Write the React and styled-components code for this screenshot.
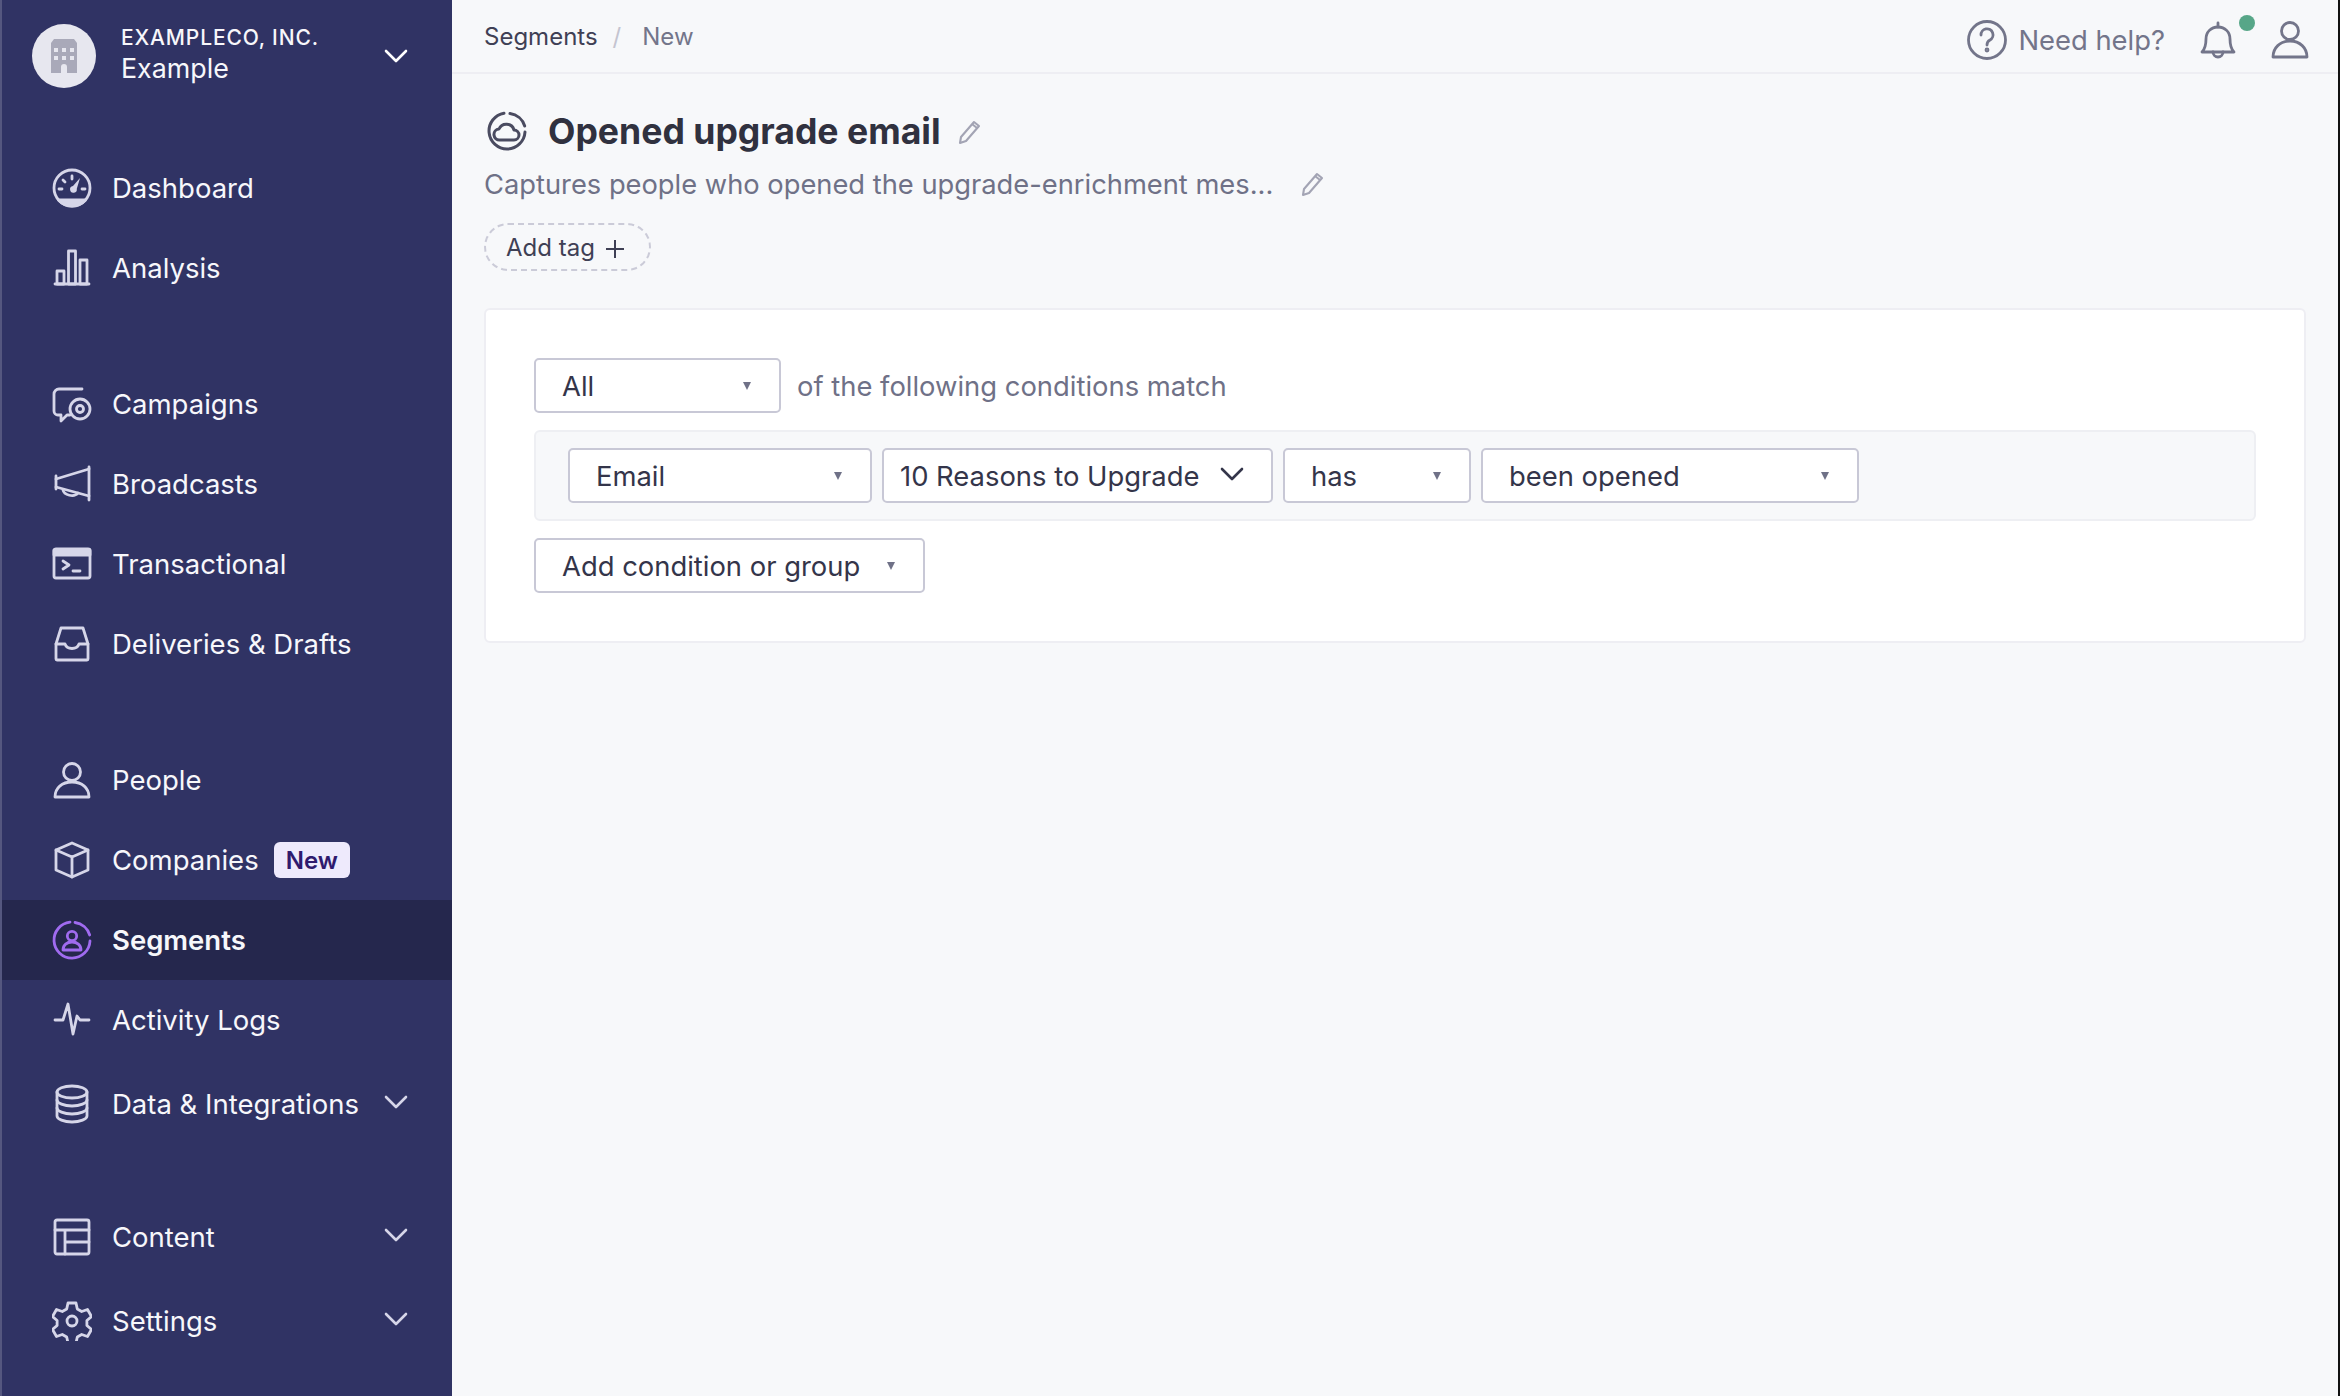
import styled, { createGlobalStyle } from 'styled-components'

const GlobalStyle = createGlobalStyle`
  html, body {
    margin: 0;
    padding: 0;
    background: #111;
  }
  body {
    font-family: Inter, 'Liberation Sans', sans-serif;
    -webkit-font-smoothing: antialiased;
  }
`

const Page = styled.div`
  display: flex;
  width: 2338px;
  height: 1396px;
  overflow: hidden;
  background: #f7f8fa;
`

const Sidebar = styled.aside`
  flex: none;
  width: 450px;
  height: 100%;
  box-sizing: content-box;
  border-left: 2px solid #55577f;
  background: #303364;
  color: #f7f7fb;
  display: flex;
  flex-direction: column;
`

const Org = styled.div`
  display: flex;
  align-items: center;
  height: 112px;
  padding: 0 44px 0 30px;
  margin-bottom: 36px;
`

const OrgLogo = styled.div`
  flex: none;
  width: 64px;
  height: 64px;
  border-radius: 50%;
  background: #e7e7ef;
  display: flex;
  align-items: center;
  justify-content: center;
  margin-right: 25px;
`

const OrgText = styled.div`
  flex: 1;
  display: flex;
  flex-direction: column;
  margin-top: -3px;
`

const OrgName = styled.div`
  font-size: 21px;
  line-height: 28px;
  font-weight: 500;
  letter-spacing: 0.85px;
`

const OrgWorkspace = styled.div`
  font-size: 26.8px;
  line-height: 33px;
`

const NavGroup = styled.nav`
  display: flex;
  flex-direction: column;
  margin-bottom: ${(p) => p.$gap}px;
`

const NavRow = styled.div`
  display: flex;
  align-items: center;
  height: ${(p) => p.$h || 80}px;
  padding: 0 44px 0 50px;
  background: ${(p) => (p.$active ? '#25274d' : 'transparent')};
  font-size: 27.5px;
  font-weight: ${(p) => (p.$active ? 600 : 400)};
`

const NavIcon = styled.svg`
  flex: none;
  width: 40px;
  height: 40px;
  margin-right: 20px;
  fill: none;
  stroke: ${(p) => p.$color || '#d6d6e9'};
  stroke-width: 2.8;
  stroke-linecap: round;
  stroke-linejoin: round;
`

const NavLabel = styled.span`
  flex: 1;
  display: flex;
  align-items: center;
`

const NewBadge = styled.span`
  margin-left: 15px;
  padding: 0 12px;
  height: 36px;
  display: inline-flex;
  align-items: center;
  border-radius: 6px;
  background: #eeeafc;
  color: #2f1a6e;
  font-size: 24px;
  font-weight: 600;
`

const Chevron = styled.svg`
  flex: none;
  width: 24px;
  height: 14px;
  margin-top: ${(p) => p.$up || 0}px;
  fill: none;
  stroke: ${(p) => p.$color || '#d6d6e9'};
  stroke-width: 2.6;
  stroke-linecap: round;
  stroke-linejoin: round;
`

const Main = styled.main`
  flex: 1;
  min-width: 0;
  display: flex;
  flex-direction: column;
`

const TopBar = styled.header`
  flex: none;
  height: 72px;
  border-bottom: 2px solid #eeeef3;
  display: flex;
  align-items: center;
  padding: 0 28px 0 32px;
`

const Crumbs = styled.div`
  flex: 1;
  display: flex;
  align-items: center;
  font-size: 24px;
  color: #3f4055;
`

const CrumbSlash = styled.span`
  color: #c4c4d0;
  margin: 0 21px 0 15px;
`

const CrumbCurrent = styled.span`
  color: #73758a;
`

const TopActions = styled.div`
  display: flex;
  align-items: center;
  color: #73758a;
  margin-top: 7px;
`

const HelpText = styled.span`
  font-size: 27.4px;
  margin: 0 33px 0 11px;
`

const TopIcon = styled.svg`
  flex: none;
  width: 40px;
  height: 40px;
  fill: none;
  stroke: #73758a;
  stroke-width: 2.8;
  stroke-linecap: round;
  stroke-linejoin: round;
`

const TitleIcon = styled(TopIcon)`
  stroke: #4a4b60;
  stroke-width: 3;
  margin: -3px 0 0 3px;
`

const BellWrap = styled.div`
  position: relative;
  display: flex;
  margin-right: 32px;
`

const BellDot = styled.span`
  position: absolute;
  top: -5px;
  right: -17px;
  width: 16px;
  height: 16px;
  border-radius: 50%;
  background: #57a688;
`

const Content = styled.div`
  padding: 34px 32px 0;
  display: flex;
  flex-direction: column;
`

const TitleRow = styled.div`
  display: flex;
  align-items: center;
  height: 48px;
`

const Title = styled.h1`
  margin: 0 15px 0 21px;
  font-size: 35.6px;
  font-weight: 700;
  color: #30313f;
  position: relative;
  top: -1px;
`

const DescRow = styled.div`
  display: flex;
  align-items: center;
  margin-top: 6px;
  height: 44px;
`

const Description = styled.span`
  font-size: 27.3px;
  color: #6f7187;
  margin-right: 26px;
`

const Pencil = styled.svg`
  flex: none;
  width: 28px;
  height: 28px;
  fill: none;
  stroke: #a3a4b4;
  stroke-width: 2.1;
  stroke-linejoin: round;
`

const AddTag = styled.div`
  align-self: flex-start;
  box-sizing: border-box;
  width: 167px;
  height: 48px;
  margin-top: 17px;
  padding-left: 20px;
  display: flex;
  align-items: center;
  border: 2px dashed #cbcbd8;
  border-radius: 24px;
  font-size: 24px;
  color: #3f4055;
`

const Plus = styled.svg`
  width: 20px;
  height: 20px;
  margin-left: 10px;
  margin-top: 3px;
  stroke: #3f4055;
  stroke-width: 2;
`

const Card = styled.section`
  box-sizing: border-box;
  width: 1822px;
  height: 335px;
  margin-top: 37px;
  padding: 48px 48px;
  background: #fff;
  border: 2px solid #eeeef3;
  border-radius: 6px;
  display: flex;
  flex-direction: column;
  gap: 17px;
`

const MatchRow = styled.div`
  display: flex;
  align-items: center;
  font-size: 27.4px;
  color: #6f7187;
  gap: 16px;
`

const ConditionRow = styled.div`
  box-sizing: border-box;
  height: 92px;
  padding: 0 32px;
  background: #f7f8fa;
  border: 2px solid #eeeff3;
  border-radius: 6px;
  display: flex;
  align-items: center;
  gap: 10px;
`

const Select = styled.div`
  box-sizing: border-box;
  flex: none;
  align-self: ${(p) => (p.$start ? 'flex-start' : 'center')};
  width: ${(p) => p.$w}px;
  height: 55px;
  padding: 0 28px 0 26px;
  display: flex;
  align-items: center;
  justify-content: space-between;
  background: #fff;
  border: 2px solid #c8c8d6;
  border-radius: 5px;
  font-size: 27.4px;
  color: #34354a;
  white-space: nowrap;
`

const WideSelect = styled(Select)`
  padding: 0 27px 0 16px;
`

const Caret = styled.span`
  flex: none;
  width: 0;
  height: 0;
  border-left: 4px solid transparent;
  border-right: 4px solid transparent;
  border-top: 8px solid #6f7187;
`

const icons = {
  dashboard: (
    <>
      <circle cx="20" cy="20" r="18" />
      <path d="M6.5 32h27a18 18 0 0 1-27 0z" fill="#d6d6e9" />
      <path d="M28 10l-7 8a3.4 3.4 0 1 0 3.8 2.8z" fill="#d6d6e9" stroke="none" />
      <path d="M20 8v3M11 12l2 2M7 21h3M30 21h3" />
    </>
  ),
  analysis: (
    <>
      <path d="M3 36h34" />
      <rect x="5" y="23" width="7" height="13" />
      <rect x="16.5" y="3" width="7" height="33" />
      <rect x="28" y="12" width="7" height="24" />
    </>
  ),
  campaigns: (
    <>
      <path d="M30 5H7a5 5 0 0 0-5 5v17a4 4 0 0 0 4 4h3v6l6-6h3" />
      <circle cx="28" cy="25" r="10" />
      <circle cx="28" cy="25" r="3.5" />
    </>
  ),
  broadcasts: (
    <>
      <path d="M4 12v13M37 3v33" />
      <path d="M4 15l33-10M4 23l33 9" />
      <path d="M11 26c1 5 11 8 15 3" />
    </>
  ),
  transactional: (
    <>
      <rect x="2" y="5" width="36" height="29" rx="2" />
      <path d="M2 6h36v5H2z" fill="#d6d6e9" />
      <path d="M11 17l6 4-6 4M21 27h7" />
    </>
  ),
  inbox: (
    <>
      <path d="M4 20l5-16h22l5 16v15a1 1 0 0 1-1 1H5a1 1 0 0 1-1-1z" />
      <path d="M4 20h9c2 6 12 6 14 0h9" />
    </>
  ),
  people: (
    <>
      <circle cx="20" cy="12" r="8.5" />
      <path d="M3 37c0-9 7-15 17-15s17 6 17 15z" />
    </>
  ),
  box: (
    <>
      <path d="M20 3l16 7v20l-16 7-16-7V10z" />
      <path d="M4 10l16 7 16-7M20 17v20" />
    </>
  ),
  segments: (
    <>
      <path d="M18 2.2A18 18 0 1 0 38 21" />
      <path d="M23 2.5A18 18 0 0 1 37.7 15" />
      <circle cx="20" cy="16" r="4.7" />
      <path d="M11 30c0-5 4-8 9-8s9 3 9 8z" />
    </>
  ),
  activity: <path d="M3 20h8l5-16 5 30 4-18 3 4h9" />,
  database: (
    <>
      <ellipse cx="20" cy="8" rx="15" ry="6" />
      <path d="M5 8v24c0 3 7 6 15 6s15-3 15-6V8" />
      <path d="M5 16c0 3 7 6 15 6s15-3 15-6M5 24c0 3 7 6 15 6s15-3 15-6" />
    </>
  ),
  content: (
    <>
      <rect x="3" y="3" width="34" height="34" rx="2" />
      <path d="M3 13h34M13 13v24M13 25h24" />
    </>
  ),
  settings: (
    <>
      <circle cx="20" cy="20" r="5" />
      <path d="M16 2h8l1.3 6 4.4 2.5 5.8-2 4 7-4.6 4 0 5 4.6 4-4 7-5.8-2-4.4 2.5-1.3 6h-8l-1.3-6-4.4-2.5-5.8 2-4-7 4.6-4 0-5-4.600-4 4-7 5.800 2 4.400-2.500z" />
    </>
  ),
}

const DownChevron = ({ color, up }) => (
  <Chevron viewBox="0 0 24 14" $color={color} $up={up}>
    <path d="M2 2l10 10L22 2" />
  </Chevron>
)

const PencilIcon = () => (
  <Pencil viewBox="0 0 28 28">
    <path d="M5 19L18 4l5 4L10 23l-6 2z" />
    <path d="M16 6l5 4" />
  </Pencil>
)

const NavItem = ({ icon, label, badge, active, expandable, height }) => (
  <NavRow $active={active} $h={height}>
    <NavIcon viewBox="0 0 40 40" $color={active ? '#a06bf0' : undefined}>
      {icons[icon]}
    </NavIcon>
    <NavLabel>
      {label}
      {badge && <NewBadge>{badge}</NewBadge>}
    </NavLabel>
    {expandable && <DownChevron up={-4} />}
  </NavRow>
)

const App = () => {
  return (
    <Page>
      <GlobalStyle />
      <Sidebar>
        <Org>
          <OrgLogo>
            <svg width="26" height="34" viewBox="0 0 26 34">
              <path d="M3 0h20l3 4v30H16v-6a3 3 0 0 0-6 0v6H0V4z" fill="#a9a9b9" />
              <g fill="#e7e7ef">
                <rect x="3" y="9" width="4" height="4" />
                <rect x="11" y="9" width="4" height="4" />
                <rect x="19" y="9" width="4" height="4" />
                <rect x="3" y="17" width="4" height="4" />
                <rect x="11" y="17" width="4" height="4" />
                <rect x="19" y="17" width="4" height="4" />
              </g>
            </svg>
          </OrgLogo>
          <OrgText>
            <OrgName>EXAMPLECO, INC.</OrgName>
            <OrgWorkspace>Example</OrgWorkspace>
          </OrgText>
          <DownChevron color="#ffffff" />
        </Org>
        <NavGroup $gap={56}>
          <NavItem icon="dashboard" label="Dashboard" />
          <NavItem icon="analysis" label="Analysis" />
        </NavGroup>
        <NavGroup $gap={56}>
          <NavItem icon="campaigns" label="Campaigns" />
          <NavItem icon="broadcasts" label="Broadcasts" />
          <NavItem icon="transactional" label="Transactional" />
          <NavItem icon="inbox" label="Deliveries & Drafts" />
        </NavGroup>
        <NavGroup $gap={47}>
          <NavItem icon="people" label="People" />
          <NavItem icon="box" label="Companies" badge="New" />
          <NavItem icon="segments" label="Segments" active />
          <NavItem icon="activity" label="Activity Logs" />
          <NavItem icon="database" label="Data & Integrations" expandable height={88} />
        </NavGroup>
        <NavGroup $gap={0}>
          <NavItem icon="content" label="Content" expandable height={84} />
          <NavItem icon="settings" label="Settings" expandable height={84} />
        </NavGroup>
      </Sidebar>
      <Main>
        <TopBar>
          <Crumbs>
            Segments
            <CrumbSlash>/</CrumbSlash>
            <CrumbCurrent>New</CrumbCurrent>
          </Crumbs>
          <TopActions>
            <TopIcon viewBox="0 0 40 40">
              <circle cx="20" cy="20" r="18.5" />
              <path d="M14 15a6 6 0 1 1 9 5c-2 1-3 2-3 5" />
              <circle cx="20" cy="30" r="1" />
            </TopIcon>
            <HelpText>Need help?</HelpText>
            <BellWrap>
              <TopIcon viewBox="0 0 40 40">
                <path d="M4 32c3-3 4-6 4-13 0-7 5-12 12-12s12 5 12 12c0 7 1 10 4 13z" />
                <path d="M20 3v4M15 32a5 5 0 0 0 10 0" />
              </TopIcon>
              <BellDot />
            </BellWrap>
            <TopIcon viewBox="0 0 40 40">
              <circle cx="20" cy="11" r="8.5" />
              <path d="M3 37c0-9 7-16 17-16s17 7 17 16z" />
            </TopIcon>
          </TopActions>
        </TopBar>
        <Content>
          <TitleRow>
            <TitleIcon viewBox="0 0 40 40">
              <path d="M17 2.2A18 18 0 1 0 38 21" />
              <path d="M23 2.5A18 18 0 0 1 37.7 15" />
              <path d="M13 29a5.5 5.5 0 0 1-1-11 8 8 0 0 1 15 1 5 5 0 0 1 0 10z" />
            </TitleIcon>
            <Title>Opened upgrade email</Title>
            <PencilIcon />
          </TitleRow>
          <DescRow>
            <Description>Captures people who opened the upgrade-enrichment mes...</Description>
            <PencilIcon />
          </DescRow>
          <AddTag>
            Add tag
            <Plus viewBox="0 0 20 20">
              <path d="M10 1v18M1 10h18" />
            </Plus>
          </AddTag>
          <Card>
            <MatchRow>
              <Select $w={247}>
                All
                <Caret />
              </Select>
              of the following conditions match
            </MatchRow>
            <ConditionRow>
              <Select $w={304}>
                Email
                <Caret />
              </Select>
              <WideSelect $w={391}>
                10 Reasons to Upgrade
                <DownChevron color="#34354a" up={-4} />
              </WideSelect>
              <Select $w={188}>
                has
                <Caret />
              </Select>
              <Select $w={378}>
                been opened
                <Caret />
              </Select>
            </ConditionRow>
            <Select $w={391} $start>
              Add condition or group
              <Caret />
            </Select>
          </Card>
        </Content>
      </Main>
    </Page>
  )
}

export default App
